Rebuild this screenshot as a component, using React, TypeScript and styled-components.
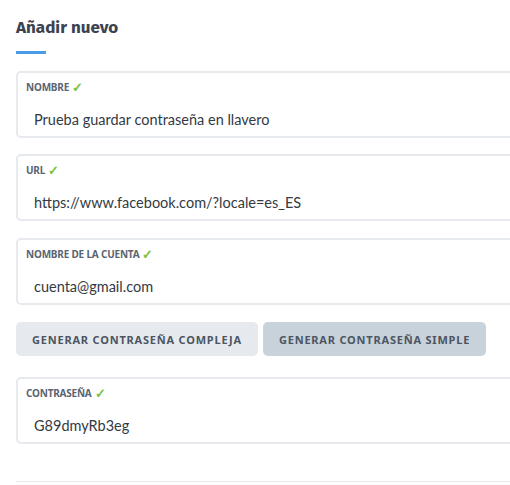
import React from "react";
import styled, { createGlobalStyle } from "styled-components";

const Global = createGlobalStyle`
  html, body { margin: 0; padding: 0; background: #fff; overflow: hidden; }
  body { font-family: "Lato", "Noto Sans", sans-serif; }
`;

const Page = styled.div`
  width: 560px;
  padding: 18px 0 0 16px;
  box-sizing: border-box;
`;

const Title = styled.h2`
  margin: 0;
  font-family: "Fira Sans", "Noto Sans", sans-serif;
  font-weight: 700;
  font-size: 17px;
  line-height: 20px;
  color: #3b4350;
`;

const TitleBar = styled.div`
  width: 30px;
  height: 3px;
  background: #4a9be8;
  margin: 13px 0 17px;
`;

const Field = styled.div<{ $mb?: number }>`
  border: 2px solid #e6e9ed;
  border-radius: 5px;
  height: 67px;
  box-sizing: border-box;
  padding: 8px 8px 0 8px;
  margin-bottom: ${(p) => p.$mb ?? 16}px;
  display: flex;
  flex-direction: column;
`;

const Label = styled.div`
  font-family: "Noto Sans", sans-serif;
  font-weight: 700;
  font-size: 10px;
  line-height: 12px;
  color: #5b6470;
  letter-spacing: -0.2px;
  display: flex;
  align-items: center;
  gap: 3px;
`;

const Check = styled.span`
  color: #7dc242;
  font-size: 13px;
  font-weight: 700;
`;

const Value = styled.div`
  margin-top: 18px;
  padding-left: 8px;
  font-family: "Lato", sans-serif;
  font-size: 14.5px;
  line-height: 18px;
  color: #333a44;
`;

const Buttons = styled.div`
  display: flex;
  gap: 5px;
  margin-bottom: 21px;
`;

const Btn = styled.button<{ $active?: boolean }>`
  height: 34px;
  border: none;
  border-radius: 5px;
  background: ${(p) => (p.$active ? "#c8d2da" : "#e6eaee")};
  font-family: "Noto Sans", sans-serif;
  font-weight: 700;
  font-size: 11px;
  letter-spacing: 0.8px;
  color: #4c5561;
  padding: 0 16px;
  cursor: pointer;
`;

const Divider = styled.div`
  height: 1px;
  background: #e6e9ed;
  margin-top: 37px;
`;

const fields = [
  { label: "NOMBRE", value: "Prueba guardar contraseña en llavero", mb: 16 },
  { label: "URL", value: "https://www.facebook.com/?locale=es_ES", mb: 17 },
  { label: "NOMBRE DE LA CUENTA", value: "cuenta@gmail.com", mb: 17 },
];

export default function App() {
  return (
    <Page>
      <Global />
      <Title>Añadir nuevo</Title>
      <TitleBar />
      {fields.map((f) => (
        <Field key={f.label} $mb={f.mb}>
          <Label>
            {f.label} <Check>✓</Check>
          </Label>
          <Value>{f.value}</Value>
        </Field>
      ))}
      <Buttons>
        <Btn>GENERAR CONTRASEÑA COMPLEJA</Btn>
        <Btn $active>GENERAR CONTRASEÑA SIMPLE</Btn>
      </Buttons>
      <Field $mb={0}>
        <Label>
          CONTRASEÑA <Check>✓</Check>
        </Label>
        <Value>G89dmyRb3eg</Value>
      </Field>
      <Divider />
    </Page>
  );
}
